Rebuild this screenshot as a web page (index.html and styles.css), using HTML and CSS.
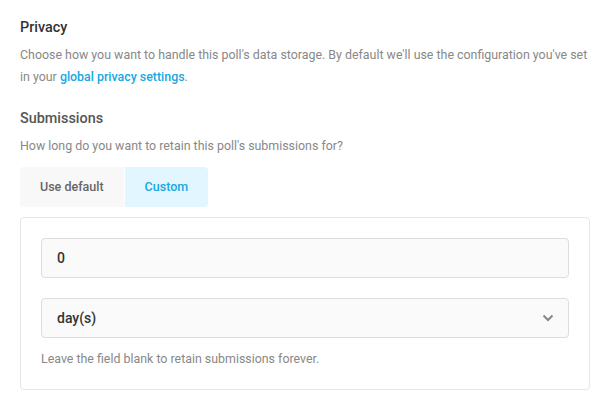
FILE: index.html
```html
<!DOCTYPE html>
<html lang="en">
<head>
<meta charset="utf-8">
<title>Privacy</title>
<link rel="stylesheet" href="styles.css">
</head>
<body>
<div class="page">
  <h2 class="title title-main">Privacy</h2>
  <p class="desc">Choose how you want to handle this poll's data storage. By default we'll use the configuration you've set in your <a class="link" href="#">global privacy settings</a>.</p>

  <h3 class="title title-sub">Submissions</h3>
  <p class="desc desc-sub">How long do you want to retain this poll's submissions for?</p>

  <div class="tabs">
    <div class="tab">Use default</div>
    <div class="tab tab-active">Custom</div>
  </div>

  <div class="panel">
    <div class="field">0</div>
    <div class="field field-select">
      <span>day(s)</span>
      <svg class="chevron" width="12" height="8" viewBox="0 0 12 8"><path d="M1.5 1.5 L6 6 L10.5 1.5" fill="none" stroke="#888" stroke-width="2"/></svg>
    </div>
    <p class="help">Leave the field blank to retain submissions forever.</p>
  </div>
</div>
</body>
</html>
```

FILE: styles.css
```css
* { box-sizing: border-box; }
html, body { margin: 0; padding: 0; background: #fff; }
body { font-family: Roboto, "Noto Sans", Arial, sans-serif; }

.page {
  width: 610px;
  padding: 18px 20px 0 20px;
}

.title {
  margin: 0;
  font-size: 14.4px;
  line-height: 20px;
  font-weight: 500;
}
.title-main { color: #333333; }
.title-sub { color: #555555; margin-top: 21px; }

.desc {
  margin: 6px -6px 0 0;
  font-size: 12.4px;
  line-height: 22px;
  color: #888888;
}

.link {
  color: #17A8E3;
  font-weight: 500;
  text-decoration: none;
}

.tabs {
  display: flex;
  margin-top: 10px;
  gap: 1px;
}
.tab {
  height: 40px;
  line-height: 40px;
  padding: 0 20px;
  font-size: 12.5px;
  font-weight: 500;
  color: #666666;
  background: #F8F8F8;
}
.tab:first-child { border-radius: 4px 0 0 4px; }
.tab:last-child { border-radius: 0 4px 4px 0; }
.tab-active {
  background: #E1F6FE;
  color: #17A8E3;
}

.panel {
  margin-top: 10px;
  border: 1px solid #E6E6E6;
  border-radius: 4px;
  padding: 20px 20px 19px 20px;
  display: flex;
  flex-direction: column;
  gap: 20px;
}

.field {
  height: 40px;
  border: 1px solid #DDDDDD;
  border-radius: 4px;
  background: #FAFAFA;
  padding: 0 15px;
  font-size: 14px;
  font-weight: 500;
  color: #333333;
  display: flex;
  align-items: center;
}
.field-select { justify-content: space-between; }
.chevron { display: block; margin-right: -1px; }

.help {
  margin: -10px 0 0 0;
  font-size: 12.4px;
  line-height: 22px;
  color: #888888;
}
```
